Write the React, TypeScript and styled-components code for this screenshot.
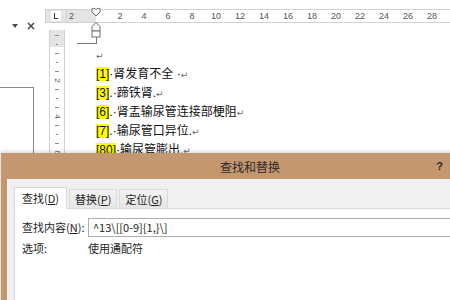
import styled, { createGlobalStyle } from 'styled-components'

const colors = {
  frame: '#c4976e',
  ruler: '#e4e4e4',
  rulerLine: '#d2d2d2',
  dialog: '#f0f0f0',
  tabBorder: '#d9d9d9',
  mark: '#6f6f6f',
  highlight: '#ffff00',
  text: '#1e1e1e',
}

const GlobalStyle = createGlobalStyle`
  html, body {
    margin: 0;
    padding: 0;
    background: #fff;
  }
  body {
    font-family: 'Noto Sans CJK SC', 'Noto Sans', sans-serif;
    color: ${colors.text};
  }
`

const Page = styled.div`
  position: relative;
  width: 450px;
  height: 300px;
  overflow: hidden;
  background: #fff;
`

const Workspace = styled.div`
  display: grid;
  grid-template-columns: 45px 22px 1fr;
  grid-template-rows: 9px 14px 1fr;
  height: 100%;
`

// left navigation pane
const NavPane = styled.div`
  grid-column: 1;
  grid-row: 1 / 4;
  display: flex;
  flex-direction: column;
`

const PaneControls = styled.div`
  display: flex;
  align-items: center;
  gap: 9px;
  height: 10px;
  margin: 21px 0 0 12px;
`

const DropArrow = styled.span`
  width: 0;
  height: 0;
  border-left: 3px solid transparent;
  border-right: 3px solid transparent;
  border-top: 4px solid #4a4a4a;
`

const OutlineBox = styled.div`
  width: 33px;
  flex: 1;
  margin-top: 56px;
  border-top: 1px solid #858585;
  border-right: 1px solid #858585;
`

// rulers
const TabCorner = styled.div`
  grid-column: 2;
  grid-row: 2;
  display: flex;
  align-items: center;
  justify-content: center;
  background: ${colors.ruler};
  border: 1px solid ${colors.rulerLine};
`

const TabStopBox = styled.div`
  width: 10px;
  height: 10px;
  background: #fff;
  display: flex;
  align-items: center;
  justify-content: center;
`

const TabStopGlyph = styled.span`
  width: 3px;
  height: 5px;
  border-left: 1.5px solid #333;
  border-bottom: 1.5px solid #333;
`

const HRuler = styled.div`
  grid-column: 3;
  grid-row: 2;
  position: relative;
  display: flex;
  border-top: 1px solid ${colors.rulerLine};
  border-bottom: 1px solid ${colors.rulerLine};
  font-family: 'Liberation Sans', sans-serif;
  font-size: 9px;
  line-height: 12px;
  color: #555;
`

const RulerMargin = styled.div`
  width: 29px;
  padding-left: 2px;
  box-sizing: border-box;
  background: ${colors.ruler};
`

const RulerScale = styled.div`
  flex: 1;
  display: flex;
  padding-left: 12px;
  background: #fff;
`

const RulerNumber = styled.span`
  width: 24px;
  flex: none;
  text-align: center;
`

const IndentMarker = styled.svg`
  position: absolute;
  left: 23px;
  top: -3px;
`

const VRuler = styled.div`
  grid-column: 2;
  grid-row: 3;
  width: 16px;
  margin: 7px 0 0 4px;
  padding-top: 1px;
  box-sizing: border-box;
  display: flex;
  flex-direction: column;
  border-left: 1px solid ${colors.rulerLine};
  border-right: 1px solid ${colors.rulerLine};
  background: linear-gradient(${colors.ruler} 0 17px, #fff 17px);
`

const VRulerCell = styled.div`
  height: 9px;
  flex: none;
  display: flex;
  align-items: center;
  justify-content: center;
  font-family: 'Liberation Sans', sans-serif;
  font-size: 8px;
  color: #555;
`

const Tick = styled.span<{ $short?: boolean }>`
  width: ${(p) => (p.$short ? 2 : 4)}px;
  height: 1px;
  background: #8a8a8a;
`

const RotatedNumber = styled.span`
  transform: rotate(90deg);
`

// document
const Doc = styled.div`
  grid-column: 3;
  grid-row: 3;
  display: flex;
  flex-direction: column;
  padding-left: 29px;
  font-family: 'Liberation Sans', 'Noto Sans CJK SC', sans-serif;
  font-size: 12px;
  line-height: 18px;
  color: #111;
`

const CornerMark = styled.div`
  width: 19px;
  height: 11px;
  margin: 9px 0 2px -19px;
  border-right: 1px solid #7a7a7a;
  border-bottom: 1px solid #7a7a7a;
`

const Para = styled.div`
  white-space: nowrap;
`

const Highlight = styled.span`
  background: ${colors.highlight};
`

const Mark = styled.span`
  color: #6a6a6a;
  font-family: 'DejaVu Sans', sans-serif;
  font-size: 9px;
`

// dialog
const Dialog = styled.div`
  position: absolute;
  left: 1px;
  top: 153px;
  width: 498px;
  height: 170px;
  display: flex;
  flex-direction: column;
  background: ${colors.frame};
  box-shadow: 0 0 6px rgba(0, 0, 0, 0.25);
`

const TitleBar = styled.div`
  height: 26px;
  flex: none;
  display: grid;
  grid-template-columns: 1fr auto 1fr;
  align-items: center;
`

const Title = styled.span`
  grid-column: 2;
  font-size: 12px;
  color: #2a2a2a;
`

const HelpButton = styled.span`
  justify-self: end;
  margin-right: 56px;
  font-family: 'Liberation Sans', sans-serif;
  font-size: 11px;
  font-weight: bold;
  color: #2a2a2a;
`

const DialogBody = styled.div`
  flex: 1;
  display: flex;
  flex-direction: column;
  margin: 0 6px;
  padding: 6px 0 0 6px;
  background: ${colors.dialog};
  border-left: 1px solid #f8f8f8;
`

const TabList = styled.div`
  display: flex;
  align-items: flex-end;
  gap: 2px;
  height: 23px;
  font-size: 11px;
`

const Tab = styled.div<{ $active?: boolean }>`
  position: relative;
  z-index: ${(p) => (p.$active ? 1 : 0)};
  height: ${(p) => (p.$active ? 22 : 20)}px;
  padding: 0 ${(p) => (p.$active ? 7 : 5)}px;
  box-sizing: border-box;
  display: flex;
  align-items: center;
  background: ${(p) => (p.$active ? '#fff' : 'linear-gradient(#f2f2f2, #e6e6e6)')};
  border: 1px solid ${colors.tabBorder};
  border-bottom-color: ${(p) => (p.$active ? '#fff' : colors.tabBorder)};
  margin-bottom: -1px;
`

const Key = styled.span`
  text-decoration: underline;
`

const TabPanel = styled.div`
  flex: 1;
  display: grid;
  grid-template-columns: 66px 1fr;
  grid-auto-rows: min-content;
  row-gap: 1px;
  align-items: center;
  padding: 8px 0 0 7px;
  background: #fff;
  border: 1px solid ${colors.tabBorder};
  font-size: 11px;
`

const Label = styled.span`
  line-height: 20px;
  white-space: nowrap;
`

const Field = styled.div`
  width: 400px;
  height: 19px;
  box-sizing: border-box;
  padding-left: 4px;
  border: 1px solid #abadb3;
  line-height: 17px;
  white-space: nowrap;
`

const hRulerNumbers = [2, 4, 6, 8, 10, 12, 14, 16, 18, 20, 22, 24, 26, 28]

// tick pattern for the vertical ruler, 9px per cell
const vRulerCells: string[] = [
  'tick', 'short', 'tick', 'short', 'tick', '2', 'tick', 'short',
  'tick', '4', 'tick', 'short', 'tick', '6', 'tick', 'short',
]

const entries = [
  { num: '[1]', text: '·肾发育不全 ·' },
  { num: '[3]', text: '.·蹄铁肾.' },
  { num: '[6]', text: '.·肾盂输尿管连接部梗阻' },
  { num: '[7]', text: '.·输尿管口异位.' },
  { num: '[80]', text: '·输尿管膨出.' },
]

const App = () => {
  return (
    <Page>
      <GlobalStyle />
      <Workspace>
        <NavPane>
          <PaneControls>
            <DropArrow />
            <svg width="8" height="8" viewBox="0 0 8 8">
              <path d="M1 1 L7 7 M7 1 L1 7" stroke="#4a4a4a" strokeWidth="1.6" />
            </svg>
          </PaneControls>
          <OutlineBox />
        </NavPane>

        <TabCorner>
          <TabStopBox>
            <TabStopGlyph />
          </TabStopBox>
        </TabCorner>

        <HRuler>
          <RulerMargin>2</RulerMargin>
          <RulerScale>
            {hRulerNumbers.map((n) => (
              <RulerNumber key={n}>{n}</RulerNumber>
            ))}
          </RulerScale>
          <IndentMarker width="12" height="36" viewBox="0 0 12 36">
            <path d="M2 1.5 Q4 0.5 6 2.5 Q8 0.5 10 1.5 L10 5 L6 9 L2 5 Z" fill="#fafafa" stroke="#707070" strokeWidth="1" />
            <path d="M2 24 L2 19.5 L6 15.5 L10 19.5 L10 24 Z" fill="#fafafa" stroke="#707070" strokeWidth="1" />
            <rect x="2" y="24" width="8" height="6" fill="#fafafa" stroke="#707070" strokeWidth="1" />
          </IndentMarker>
        </HRuler>

        <VRuler>
          {vRulerCells.map((c, i) => (
            <VRulerCell key={i}>
              {c === 'tick' && <Tick />}
              {c === 'short' && <Tick $short />}
              {c !== 'tick' && c !== 'short' && <RotatedNumber>{c}</RotatedNumber>}
            </VRulerCell>
          ))}
        </VRuler>

        <Doc>
          <CornerMark />
          <Para>
            <Mark>↵</Mark>
          </Para>
          {entries.map((e) => (
            <Para key={e.num}>
              <Highlight>{e.num}</Highlight>
              {e.text}
              <Mark>↵</Mark>
            </Para>
          ))}
        </Doc>
      </Workspace>

      <Dialog>
        <TitleBar>
          <Title>查找和替换</Title>
          <HelpButton>?</HelpButton>
        </TitleBar>
        <DialogBody>
          <TabList>
            <Tab $active>
              查找(<Key>D</Key>)
            </Tab>
            <Tab>
              替换(<Key>P</Key>)
            </Tab>
            <Tab>
              定位(<Key>G</Key>)
            </Tab>
          </TabList>
          <TabPanel>
            <Label>
              查找内容(<Key>N</Key>):
            </Label>
            <Field>{'^13\\[[0-9]{1,}\\]'}</Field>
            <Label>选项:</Label>
            <Label>使用通配符</Label>
          </TabPanel>
        </DialogBody>
      </Dialog>
    </Page>
  )
}

export default App
